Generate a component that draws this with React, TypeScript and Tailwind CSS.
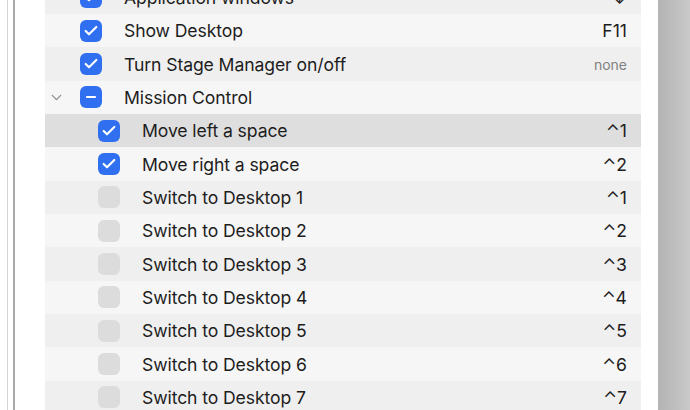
import { Check, ChevronDown, Minus } from "lucide-react";

type Row = {
  label: string;
  keys: string;
  state: "on" | "off" | "mixed";
  child?: boolean;
  group?: boolean;
  muted?: boolean;
};

const rows: Row[] = [
  { label: "Application windows", keys: "⌃↓", state: "on" },
  { label: "Show Desktop", keys: "F11", state: "on" },
  { label: "Turn Stage Manager on/off", keys: "none", state: "on", muted: true },
  { label: "Mission Control", keys: "", state: "mixed", group: true },
  { label: "Move left a space", keys: "⌃1", state: "on", child: true },
  { label: "Move right a space", keys: "⌃2", state: "on", child: true },
  { label: "Switch to Desktop 1", keys: "⌃1", state: "off", child: true },
  { label: "Switch to Desktop 2", keys: "⌃2", state: "off", child: true },
  { label: "Switch to Desktop 3", keys: "⌃3", state: "off", child: true },
  { label: "Switch to Desktop 4", keys: "⌃4", state: "off", child: true },
  { label: "Switch to Desktop 5", keys: "⌃5", state: "off", child: true },
  { label: "Switch to Desktop 6", keys: "⌃6", state: "off", child: true },
  { label: "Switch to Desktop 7", keys: "⌃7", state: "off", child: true },
];

function Box({ state }: { state: Row["state"] }) {
  if (state === "off") {
    return <div className="w-[22px] h-[22px] rounded-[6px] bg-[#dcdcdc]" />;
  }
  return (
    <div className="w-[22px] h-[22px] rounded-[6px] bg-[#2f6ff0] flex items-center justify-center text-white">
      {state === "on" ? (
        <Check size={16} strokeWidth={3.2} />
      ) : (
        <Minus size={14} strokeWidth={3.4} />
      )}
    </div>
  );
}

export default function App() {
  return (
    <div
      className="w-[690px] h-[410px] overflow-hidden bg-white flex"
      style={{ fontFamily: "Inter, 'Liberation Sans', 'DejaVu Sans', sans-serif" }}
    >
      <div className="w-[7px] shrink-0" />
      <div className="w-px shrink-0 bg-[#d4d4d4]" />
      <div className="w-[5px] shrink-0" />
      <div className="w-[2px] shrink-0 bg-[#a9a9a9]" />
      <div className="w-[30px] shrink-0" />
      <div className="w-[596px] shrink-0 -mt-[19.33px]">
        {rows.map((r, i) => (
          <div
            key={r.label}
            className={
              "h-[33.33px] flex items-center pr-[14px] " +
              (i === 4 ? "bg-[#dedede]" : i % 2 === 0 ? "bg-[#efefef]" : "bg-[#f6f6f6]")
            }
          >
            <div className="w-[35px] shrink-0 flex justify-start pl-[3px] text-[#8a8a8a]">
              {r.group && <ChevronDown size={17} strokeWidth={1.8} />}
            </div>
            {r.child && <div className="w-[18px] shrink-0" />}
            <Box state={r.state} />
            <span className="relative top-[1px] ml-[22px] text-[17.6px] text-[#1d1d1d] tracking-[-0.1px]">
              {r.label}
            </span>
            <span
              className={
                "relative top-[1px] ml-auto " +
                (r.muted ? "text-[14px] text-[#808080]" : "text-[17.6px] text-[#1d1d1d]")
              }
            >
              {r.keys}
            </span>
          </div>
        ))}
      </div>
      <div className="w-[17px] shrink-0" />
      <div className="flex-1 bg-gradient-to-r from-[#b3b3b3] to-[#c9c9c9]" />
    </div>
  );
}
